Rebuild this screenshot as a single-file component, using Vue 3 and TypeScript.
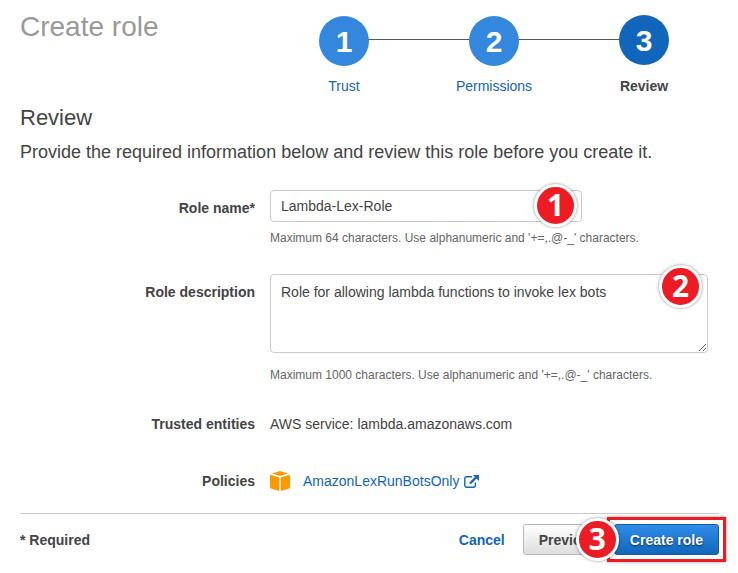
<script setup lang="ts">
import { ref } from 'vue'

interface Step {
  number: number
  label: string
  current: boolean
}

const steps: Step[] = [
  { number: 1, label: 'Trust', current: false },
  { number: 2, label: 'Permissions', current: false },
  { number: 3, label: 'Review', current: true },
]

const roleName = ref('Lambda-Lex-Role')
const roleDescription = ref('Role for allowing lambda functions to invoke lex bots')
</script>

<template>
  <main class="page">
    <header class="header">
      <h1 class="title">Create role</h1>
      <ol class="steps">
        <li v-for="step in steps" :key="step.number" class="step" :class="{ current: step.current }">
          <span class="circle">{{ step.number }}</span>
          <span v-if="step.current" class="step-label">{{ step.label }}</span>
          <a v-else href="#" class="step-label">{{ step.label }}</a>
        </li>
      </ol>
    </header>

    <h2 class="section-title">Review</h2>
    <p class="intro">Provide the required information below and review this role before you create it.</p>

    <form id="role-form" class="form" @submit.prevent>
      <label class="label" for="role-name">Role name*</label>
      <div class="field">
        <div class="control name-control">
          <input id="role-name" v-model="roleName" class="input" type="text" />
          <span class="marker name-marker">1</span>
        </div>
        <p class="hint">Maximum 64 characters. Use alphanumeric and '+=,.@-_' characters.</p>
      </div>

      <label class="label" for="role-description">Role description</label>
      <div class="field">
        <div class="control description-control">
          <textarea id="role-description" v-model="roleDescription" class="input textarea"></textarea>
          <span class="marker description-marker">2</span>
        </div>
        <p class="hint description-hint">Maximum 1000 characters. Use alphanumeric and '+=,.@-_' characters.</p>
      </div>

      <span class="label static">Trusted entities</span>
      <span class="value">AWS service: lambda.amazonaws.com</span>

      <span class="label static">Policies</span>
      <div class="value policy">
        <svg class="cube" viewBox="0 0 20 20" width="20" height="20" aria-hidden="true">
          <path d="M10 0 18 2.6 10 5.1 2 2.6Z" />
          <path d="M0 3.8 9.3 6.4V20L0 17.2Z" />
          <path d="M20 3.8 10.7 6.4V20L20 17.2Z" />
        </svg>
        <a href="#" class="policy-link">
          AmazonLexRunBotsOnly
          <svg class="external" viewBox="0 0 15 13" width="15" height="13" aria-hidden="true">
            <path d="M8 1.7H2.5Q.8 1.7.8 3.4V10.5Q.8 12.2 2.5 12.2H9.7Q11.4 12.2 11.4 10.5V7.5" fill="none" stroke="currentColor" stroke-width="1.4" />
            <path d="M6 8.5 12 2.5" fill="none" stroke="currentColor" stroke-width="2.4" />
            <path d="M9 0H15V6Z" fill="currentColor" />
          </svg>
        </a>
      </div>
    </form>

    <footer class="footer">
      <span class="required">* Required</span>
      <div class="actions">
        <a href="#" class="cancel">Cancel</a>
        <button type="button" class="button">Previous</button>
        <div class="submit">
          <button type="submit" form="role-form" class="button primary">Create role</button>
          <span class="highlight"></span>
          <span class="marker submit-marker">3</span>
        </div>
      </div>
    </footer>
  </main>
</template>

<style>
body {
  background: #fff;
}
</style>

<style scoped>
.page {
  box-sizing: border-box;
  padding: 0 19px 0 20px;
  color: #444;
  font-family: "Liberation Sans", Arial, sans-serif;
  font-size: 14px;
  line-height: 20px;
  overflow: hidden;
}

a {
  color: #1166bb;
  text-decoration: none;
}

h1,
h2,
p,
ol {
  margin: 0;
  padding: 0;
}

.header {
  display: flex;
  justify-content: space-between;
  padding-top: 10px;
}

.title {
  color: #999;
  font-size: 28px;
  font-weight: 400;
  line-height: 34px;
}

.steps {
  display: flex;
  width: 450px;
  padding-top: 5px;
  list-style: none;
}

.step {
  position: relative;
  display: flex;
  flex: 1;
  flex-direction: column;
  align-items: center;
  gap: 10px;
}

.step + .step::before {
  content: "";
  position: absolute;
  top: 24px;
  right: 50%;
  width: 100%;
  height: 1px;
  background: #545b58;
}

.circle {
  z-index: 1;
  width: 50px;
  height: 50px;
  margin-top: 1px;
  border-radius: 50%;
  background: #3388dd;
  color: #fff;
  font-size: 30px;
  font-weight: 700;
  line-height: 52px;
  text-align: center;
}

.current .circle {
  margin: 0 0 1px;
  background: #1166bb;
}

.current .step-label {
  font-weight: 700;
}

.section-title {
  margin-top: 8px;
  font-size: 22px;
  font-weight: 400;
  line-height: 28px;
}

.intro {
  margin-top: 8px;
  font-size: 18px;
  line-height: 24px;
}

.form {
  display: grid;
  grid-template-columns: 235px 1fr;
  column-gap: 15px;
  margin-top: 26px;
}

.label {
  padding-top: 8px;
  font-weight: 700;
  text-align: right;
}

.label.static {
  padding-top: 0;
}

.control {
  position: relative;
}

.name-control {
  max-width: 312px;
}

.description-control {
  max-width: 438px;
}

.input {
  display: block;
  box-sizing: border-box;
  width: 100%;
  height: 32px;
  padding: 5px 10px;
  border: 1px solid #ccc;
  border-radius: 4px;
  background: #fff;
  color: #444;
  font: inherit;
  outline: 0;
}

.textarea {
  height: 79px;
  padding: 7px 10px;
}

.hint {
  margin: 6px 0 26px;
  color: #666;
  font-size: 12px;
}

.description-hint {
  margin: 12px 0 29px;
}

.value {
  margin-bottom: 37px;
}

.policy {
  display: flex;
  align-items: center;
  gap: 13px;
  margin-bottom: 22px;
}

.cube {
  fill: #ff9900;
}

.policy-link {
  display: flex;
  align-items: center;
  gap: 5px;
}

.footer {
  display: flex;
  align-items: center;
  justify-content: space-between;
  padding: 10px 0 18px;
  border-top: 1px solid #ccc;
}

.required,
.cancel {
  font-weight: 700;
}

.actions {
  display: flex;
  align-items: center;
}

.cancel {
  margin-right: 18px;
}

.button {
  box-sizing: border-box;
  height: 31px;
  margin: 0;
  padding: 0 15px;
  border: 1px solid #bbb;
  border-radius: 3px;
  background: linear-gradient(#fff, #ddd);
  color: #444;
  font: inherit;
  font-weight: 700;
}

.primary {
  border-color: #1a5a9c;
  background: linear-gradient(#2f8dea, #1166bb);
  color: #fff;
  text-shadow: 0 1px 2px rgba(0, 0, 0, 0.6);
}

.submit {
  position: relative;
}

.highlight {
  position: absolute;
  inset: -7px;
  border: 3px solid #ed1c24;
  box-shadow: 0 0 3px rgba(0, 0, 0, 0.4);
  pointer-events: none;
}

.marker {
  position: absolute;
  width: 37px;
  height: 37px;
  border: 3px solid #fff;
  border-radius: 50%;
  background: #ed1c24;
  box-shadow: 0 0 3px rgba(0, 0, 0, 0.5);
  color: #fff;
  font-family: "Noto Sans", "Open Sans", sans-serif;
  font-size: 30px;
  font-weight: 700;
  line-height: 36px;
  text-align: center;
  pointer-events: none;
}

.name-marker {
  top: -6px;
  right: 5px;
}

.description-marker {
  top: -9px;
  right: 6px;
}

.submit-marker {
  top: -6px;
  left: -38px;
}
</style>
